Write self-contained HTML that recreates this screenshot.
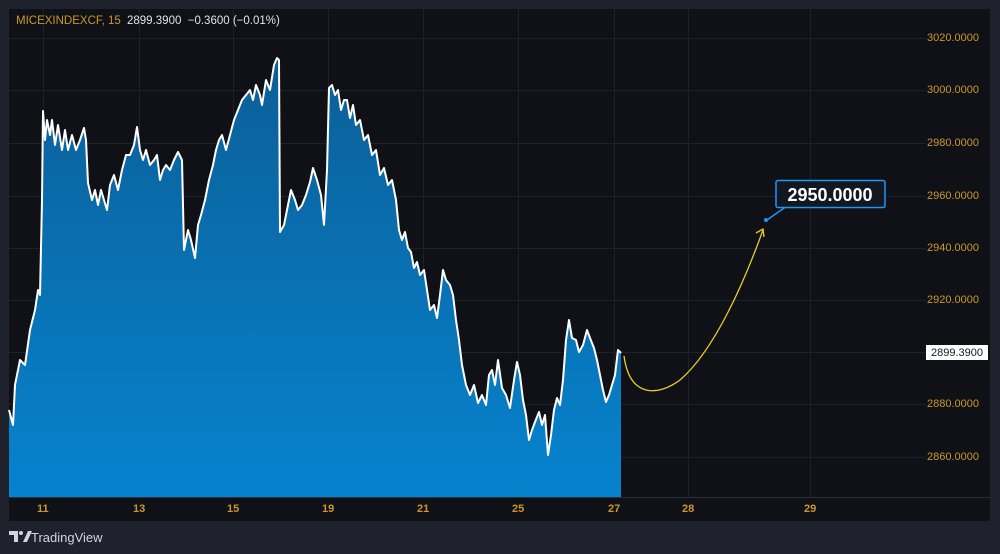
<!DOCTYPE html>
<html><head><meta charset="utf-8"><style>
html,body{margin:0;padding:0;background:#1f222d;width:1000px;height:554px;overflow:hidden;font-family:"Liberation Sans",sans-serif}
#p{position:absolute;left:9px;top:9px;width:981px;height:512px;background:#101116}
.y{position:absolute;left:920px;font-size:11px;color:#c9982c;width:66px;text-align:center}
.x{position:absolute;top:503px;font-size:11px;color:#c9982c;font-weight:bold}
</style></head><body>
<div id="p"></div>
<svg width="1000" height="554" style="position:absolute;left:0;top:0">
<defs><linearGradient id="g" x1="0" y1="0" x2="0" y2="1"><stop offset="0" stop-color="#0c5f98"/><stop offset="1" stop-color="#0683ce"/></linearGradient></defs>
<g stroke="#1e2129" stroke-width="1">
<line x1="9" y1="38.5" x2="926" y2="38.5"/><line x1="9" y1="90.5" x2="926" y2="90.5"/><line x1="9" y1="143.5" x2="926" y2="143.5"/><line x1="9" y1="196.5" x2="926" y2="196.5"/><line x1="9" y1="248.5" x2="926" y2="248.5"/><line x1="9" y1="300.5" x2="926" y2="300.5"/><line x1="9" y1="352.5" x2="926" y2="352.5"/><line x1="9" y1="404.5" x2="926" y2="404.5"/><line x1="9" y1="457.5" x2="926" y2="457.5"/>
<line x1="43.5" y1="9" x2="43.5" y2="497"/><line x1="139.5" y1="9" x2="139.5" y2="497"/><line x1="233.5" y1="9" x2="233.5" y2="497"/><line x1="328.5" y1="9" x2="328.5" y2="497"/><line x1="423.5" y1="9" x2="423.5" y2="497"/><line x1="518.5" y1="9" x2="518.5" y2="497"/><line x1="614.5" y1="9" x2="614.5" y2="497"/><line x1="688.5" y1="9" x2="688.5" y2="497"/><line x1="810.5" y1="9" x2="810.5" y2="497"/>
</g>
<line x1="9" y1="497.5" x2="990" y2="497.5" stroke="#2a2e39"/>
<path fill="url(#g)" d="M9,497 L9,410 13,425 15,385 20,360 25,365 30,330 35,310 38,290 40,295 42,200 43,111 45,140 47,120 50,135 52,120 55,145 58,125 62,150 65,130 68,150 72,135 76,150 80,140 84,128 86,140 88,183 92,200 95,190 98,205 101,190 104,200 107,210 110,185 114,175 118,190 122,170 126,155 130,155 134,145 137,127 140,150 143,160 146,150 150,165 154,160 157,155 160,180 163,170 166,165 170,170 174,160 178,152 182,160 184,250 188,230 191,240 195,258 198,225 201,215 205,200 209,180 213,165 216,150 219,140 222,135 226,150 230,135 234,120 238,110 242,100 246,95 250,90 253,100 256,85 260,95 262,105 266,80 270,90 274,65 277,58 279,60 280,232 284,225 288,205 291,190 295,200 298,210 302,205 306,195 310,182 313,168 317,180 321,195 324,225 327,170 329,88 332,85 335,95 338,90 341,110 344,100 347,100 350,118 353,105 356,125 360,120 364,140 368,135 372,155 376,150 380,175 384,168 388,185 392,180 396,200 399,230 402,240 405,232 408,248 411,252 414,268 417,262 420,275 424,270 427,290 430,310 434,305 437,318 440,295 443,270 446,280 450,285 453,295 456,320 459,340 462,365 466,385 470,395 474,385 478,403 482,395 486,405 489,375 492,370 495,385 498,360 502,388 506,395 510,408 514,380 517,362 520,375 523,400 526,415 529,440 532,430 535,422 539,412 542,425 545,415 548,455 551,435 554,410 557,398 560,405 563,380 566,340 569,320 572,338 576,340 579,352 583,345 587,330 590,338 594,348 597,360 600,375 603,390 606,402 609,395 612,385 615,375 618,350 621,353 L621,497 Z"/>
<path fill="none" stroke="#fff" stroke-width="2" stroke-linejoin="round" d="M9,410 13,425 15,385 20,360 25,365 30,330 35,310 38,290 40,295 42,200 43,111 45,140 47,120 50,135 52,120 55,145 58,125 62,150 65,130 68,150 72,135 76,150 80,140 84,128 86,140 88,183 92,200 95,190 98,205 101,190 104,200 107,210 110,185 114,175 118,190 122,170 126,155 130,155 134,145 137,127 140,150 143,160 146,150 150,165 154,160 157,155 160,180 163,170 166,165 170,170 174,160 178,152 182,160 184,250 188,230 191,240 195,258 198,225 201,215 205,200 209,180 213,165 216,150 219,140 222,135 226,150 230,135 234,120 238,110 242,100 246,95 250,90 253,100 256,85 260,95 262,105 266,80 270,90 274,65 277,58 279,60 280,232 284,225 288,205 291,190 295,200 298,210 302,205 306,195 310,182 313,168 317,180 321,195 324,225 327,170 329,88 332,85 335,95 338,90 341,110 344,100 347,100 350,118 353,105 356,125 360,120 364,140 368,135 372,155 376,150 380,175 384,168 388,185 392,180 396,200 399,230 402,240 405,232 408,248 411,252 414,268 417,262 420,275 424,270 427,290 430,310 434,305 437,318 440,295 443,270 446,280 450,285 453,295 456,320 459,340 462,365 466,385 470,395 474,385 478,403 482,395 486,405 489,375 492,370 495,385 498,360 502,388 506,395 510,408 514,380 517,362 520,375 523,400 526,415 529,440 532,430 535,422 539,412 542,425 545,415 548,455 551,435 554,410 557,398 560,405 563,380 566,340 569,320 572,338 576,340 579,352 583,345 587,330 590,338 594,348 597,360 600,375 603,390 606,402 609,395 612,385 615,375 618,350 621,353"/>
<path fill="none" stroke="#e3cf2a" stroke-width="1.3" d="M624,356 C630,400 660,395 680,380 C715,350 745,280 763,230"/>
<path fill="none" stroke="#e3cf2a" stroke-width="1.3" d="M756,233 L763,229 L764,237"/>
<line x1="767" y1="220" x2="787" y2="206" stroke="#2196f3" stroke-width="1.5"/>
<circle cx="766" cy="220" r="2" fill="#2196f3"/>
<rect x="776" y="180.5" width="109" height="27" rx="2" fill="#131722" stroke="#2196f3" stroke-width="1.5"/>
<text x="830" y="201" fill="#fff" font-size="18" font-weight="bold" text-anchor="middle" font-family="Liberation Sans">2950.0000</text>
<rect x="926" y="345" width="62" height="15" fill="#fff"/>
<text x="957" y="356" fill="#131722" font-size="11" text-anchor="middle" font-family="Liberation Sans">2899.3900</text>
<g fill="#d1d4dc"><path d="M9,531 h9 v11 h-4 v-7 h-5z"/><circle cx="21" cy="533" r="2"/><path d="M23,542 l5,-11 h4 l-5,11z"/></g>
</svg>
<div style="position:absolute;left:16px;top:15px;font-size:11.5px;color:#c9982c">MICEXINDEXCF, 15 <span style="color:#e0e3eb;margin-left:3px">2899.3900&nbsp; −0.3600 (−0.01%)</span></div>
<div class="y" style="top:32px">3020.0000</div><div class="y" style="top:84px">3000.0000</div><div class="y" style="top:137px">2980.0000</div><div class="y" style="top:190px">2960.0000</div><div class="y" style="top:242px">2940.0000</div><div class="y" style="top:294px">2920.0000</div><div class="y" style="top:398px">2880.0000</div><div class="y" style="top:451px">2860.0000</div>
<div class="x" style="left:37px">11</div><div class="x" style="left:133px">13</div><div class="x" style="left:227px">15</div><div class="x" style="left:322px">19</div><div class="x" style="left:417px">21</div><div class="x" style="left:512px">25</div><div class="x" style="left:608px">27</div><div class="x" style="left:682px">28</div><div class="x" style="left:804px">29</div>
<div style="position:absolute;left:31px;top:530px;font-size:13px;color:#d1d4dc">TradingView</div>
</body></html>
